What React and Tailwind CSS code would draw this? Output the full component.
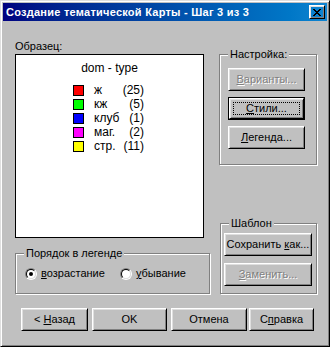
import React from 'react';

// окно мастера в стиле Win98
const bevel =
  'border border-t-white border-l-white border-r-black border-b-black shadow-[inset_1px_1px_0_#dfdfdf,inset_-1px_-1px_0_#808080]';

function Btn({ children, w, disabled, def }) {
  const txt = disabled ? 'text-[#808080] [text-shadow:1px_1px_0_#fff]' : 'text-black';
  if (def) {
    return (
      <div className={`${w} h-[23px] border border-black`}>
        <div className={`${bevel} h-full p-[3px]`}>
          <div className={`h-full border border-dotted border-black flex items-center justify-center ${txt}`}>
            {children}
          </div>
        </div>
      </div>
    );
  }
  return (
    <div className={`${w} h-[23px] ${bevel} flex items-center justify-center ${txt}`}>{children}</div>
  );
}

function Group({ label, className, children }) {
  return (
    <div className={`relative border border-[#808080] shadow-[inset_1px_1px_0_#fff,1px_1px_0_#fff] ${className}`}>
      <span className="absolute top-[-7px] left-[8px] px-[2px] bg-[#c0c0c0] leading-[13px]">{label}</span>
      {children}
    </div>
  );
}

function Radio({ checked, children }) {
  return (
    <div className="flex items-center">
      <div className="w-[12px] h-[12px] rounded-full border border-t-[#808080] border-l-[#808080] border-r-white border-b-white">
        <div className="w-full h-full rounded-full border border-t-black border-l-black border-r-[#dfdfdf] border-b-[#dfdfdf] bg-white flex items-center justify-center">
          {checked && <div className="w-[4px] h-[4px] rounded-full bg-black" />}
        </div>
      </div>
      <span className="ml-[4px]">{children}</span>
    </div>
  );
}

const items = [
  { c: 'bg-[#ff0000]', n: 'ж', v: '(25)' },
  { c: 'bg-[#00ff00]', n: 'кж', v: '(5)' },
  { c: 'bg-[#0000ff]', n: 'клуб', v: '(1)' },
  { c: 'bg-[#ff00ff]', n: 'маг.', v: '(2)' },
  { c: 'bg-[#ffff00]', n: 'стр.', v: '(11)' },
];

export default function App() {
  return (
    <div className="w-[330px] h-[347px] bg-[#c0c0c0] border border-t-[#dfdfdf] border-l-[#dfdfdf] border-r-black border-b-black shadow-[inset_1px_1px_0_#fff,inset_-1px_-1px_0_#808080] p-[2px] flex flex-col font-['Liberation_Sans',Arial,sans-serif] text-[11px] leading-[13px] text-black">
      {/* заголовок */}
      <div className="h-[18px] bg-linear-to-r from-[#000080] to-[#1084d0] flex items-center pl-[3px] pr-[2px]">
        <span className="text-white font-bold text-[11px] tracking-[0.25px] flex-1 whitespace-nowrap">
          Создание тематической Карты - Шаг 3 из 3
        </span>
        <div className={`w-[16px] h-[14px] ${bevel} flex items-center justify-center`}>
          <svg width="8" height="7" viewBox="0 0 8 7" shapeRendering="crispEdges">
            <path
              fill="#000"
              d="M0 0h2v1H0zM6 0h2v1H6zM1 1h2v1H1zM5 1h2v1H5zM2 2h4v1H2zM3 3h2v1H3zM2 4h4v1H2zM1 5h2v1H1zM5 5h2v1H5zM0 6h2v1H0zM6 6h2v1H6z"
            />
          </svg>
        </div>
      </div>

      <div className="flex flex-col pl-[12px]">
        <div className="flex mt-[19px]">
          {/* левая колонка */}
          <div className="w-[195px] flex flex-col">
            <div className="h-[13px]">Образец:</div>
            <div className="mt-[1px] w-[189px] h-[184px] border border-black bg-white pt-[6px] text-[12px] leading-[14px]">
              <div className="text-center">dom - type</div>
              <div className="mt-[8px] pl-[57px] flex flex-col">
                {items.map((it) => (
                  <div key={it.n} className="flex items-center h-[14px]">
                    <div className={`w-[11px] h-[11px] border border-black ${it.c}`} />
                    <span className="ml-[10px] w-[28px]">{it.n}</span>
                    <span className="w-[22px] text-right">{it.v}</span>
                  </div>
                ))}
              </div>
            </div>
            <Group label="Порядок в легенде" className="mt-[15px] w-[195px] h-[41px]">
              <div className="flex items-center pl-[9px] pt-[13px]">
                <Radio checked>
                  <u>в</u>озрастание
                </Radio>
                <div className="ml-[15px]">
                  <Radio>
                    <u>у</u>бывание
                  </Radio>
                </div>
              </div>
            </Group>
          </div>

          {/* правая колонка */}
          <div className="ml-[9px] flex flex-col">
            <Group label="Настройка:" className="mt-[14px] w-[98px] h-[111px]">
              <div className="flex flex-col gap-[6px] pl-[8px] pt-[13px]">
                <Btn w="w-[77px]" disabled>
                  <span>
                    <u>В</u>арианты...
                  </span>
                </Btn>
                <Btn w="w-[77px]" def>
                  <span>
                    <u>С</u>тили...
                  </span>
                </Btn>
                <Btn w="w-[77px]">
                  <span>
                    <u>Л</u>егенда...
                  </span>
                </Btn>
              </div>
            </Group>
            <Group label="Шаблон" className="mt-[58px] ml-[1px] w-[97px] h-[71px]">
              <div className="flex flex-col gap-[7px] pl-[3px] pt-[9px]">
                <Btn w="w-[88px]">
                  <span>
                    Сохранить <u>к</u>ак...
                  </span>
                </Btn>
                <Btn w="w-[88px]" disabled>
                  <span>
                    <u>З</u>аменить...
                  </span>
                </Btn>
              </div>
            </Group>
          </div>
        </div>

        {/* нижние кнопки */}
        <div className="flex mt-[14px] ml-[6px]">
          <Btn w="w-[67px]">
            <span>
              &lt; <u>Н</u>азад
            </span>
          </Btn>
          <div className="ml-[4px]">
            <Btn w="w-[75px]">OK</Btn>
          </div>
          <div className="ml-[4px]">
            <Btn w="w-[76px]">Отмена</Btn>
          </div>
          <div className="ml-[2px]">
            <Btn w="w-[65px]">
              <span>
                С<u>п</u>равка
              </span>
            </Btn>
          </div>
        </div>
      </div>
    </div>
  );
}
